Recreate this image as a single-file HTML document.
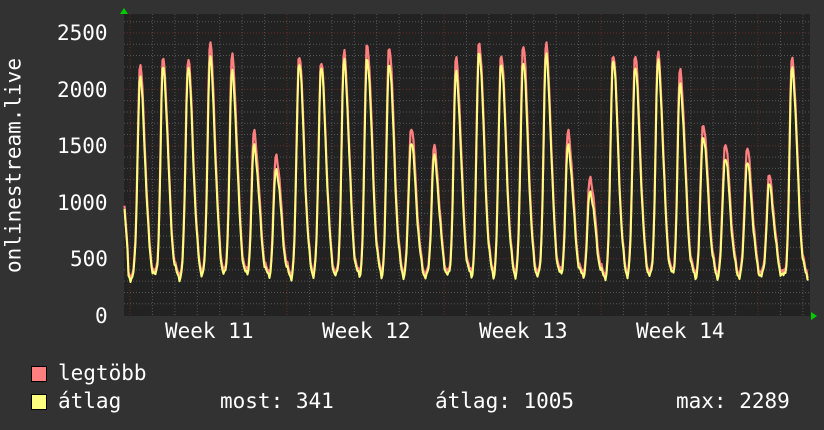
<!DOCTYPE html>
<html><head><meta charset="utf-8"><style>
html,body{margin:0;padding:0;background:#323232;}
body{width:824px;height:430px;overflow:hidden;position:relative;font-family:"DejaVu Sans Mono","Liberation Mono",monospace;color:#fff;}
.t{position:absolute;font-size:21px;white-space:pre;line-height:1;}
.sw{position:absolute;width:14px;height:14px;border:1px solid #000;}
</style></head><body>
<svg id="g" width="824" height="430" style="position:absolute;left:0;top:0">
<rect x="124" y="14" width="686" height="302" fill="#222"/>
<g id="grid"></g>
<g id="data"></g>
<polygon points="120,14 128,14 124,8" fill="#0c0"/>
<polygon points="811,312 811,320 817,316" fill="#0c0"/>
</svg>
<div class="t" style="left:57px;top:23px">2500</div>
<div class="t" style="left:57px;top:80px">2000</div>
<div class="t" style="left:57px;top:136px">1500</div>
<div class="t" style="left:57px;top:193px">1000</div>
<div class="t" style="left:70px;top:249px">500</div>
<div class="t" style="left:95px;top:306px">0</div>
<div class="t" style="left:-96px;top:155px;transform:rotate(-90deg);width:220px;text-align:center">onlinestream.live</div>
<div class="t" style="left:165px;top:321px">Week 11</div>
<div class="t" style="left:322px;top:321px">Week 12</div>
<div class="t" style="left:479px;top:321px">Week 13</div>
<div class="t" style="left:636px;top:321px">Week 14</div>
<div class="sw" style="left:31px;top:366px;background:#ff7f7f"></div>
<div class="sw" style="left:31px;top:394px;background:#ffff7f"></div>
<div class="t" style="left:58px;top:363px">legtöbb</div>
<div class="t" style="left:58px;top:391px">átlag</div>
<div class="t" style="left:220px;top:391px">most: 341</div>
<div class="t" style="left:435px;top:391px">átlag: 1005</div>
<div class="t" style="left:676px;top:391px">max: 2289</div>
<script>
var NS="http://www.w3.org/2000/svg";
function el(p,t,a){var e=document.createElementNS(NS,t);for(var k in a)e.setAttribute(k,a[k]);p.appendChild(e);return e;}
var grid=document.getElementById('grid'),data=document.getElementById('data');
function Y(v){return 315-v*0.1128;}
for(var v=100;v<=2600;v+=100){var y=Y(v);if(y<14)break;var maj=v%500==0;
el(grid,'line',{x1:124,x2:810,y1:y,y2:y,stroke:maj?'#6a2a2a':'#555','stroke-dasharray':'1,2','stroke-width':1});}
for(var x=130-22.43;x<810;x+=22.43){if(x<124)continue;var d=Math.round((x-130)/22.43);var maj=d%7==0;
el(grid,'line',{x1:x,x2:x,y1:14,y2:316,stroke:maj?'#6a2a2a':'#555','stroke-dasharray':'1,2','stroke-width':1});}
var P=[[140,2180,2100],[163,2250,2200],[188,2250,2200],[210,2380,2280],[232,2270,2150],[254,1600,1500],[276,1400,1300],[299,2290,2250],[321,2220,2200],[344,2300,2250],[367,2390,2290],[389,2370,2250],[411,1640,1540],[434,1460,1400],[456,2250,2150],[479,2410,2350],[501,2300,2250],[523,2370,2250],[546,2370,2300],[568,1600,1500],[590,1200,1100],[613,2300,2280],[635,2280,2200],[658,2290,2250],[680,2150,2050],[703,1680,1600],[725,1500,1400],[747,1450,1350],[769,1200,1150],[792,2260,2200]];
function val(x,idx){
 var s=0;
 for(var i=0;i<P.length;i++){var dx=x-P[i][0];var pk=P[i][idx]-330;var f;
  if(dx<0)f=Math.exp(-Math.pow(dx/3.4,2));else f=Math.exp(-Math.pow(dx/7,2));
  s=Math.max(s,pk*f);}
 var base=330+25*Math.sin(x*0.9)+15*Math.sin(x*2.3);
 if(x<128)return 1000-(x-124)*120;
 return base+s;}
function path(idx,col,w){var d='';for(var x=124.5;x<=809;x+=1){var v=val(x,idx);if(idx==1)v+=20+10*Math.abs(Math.sin(x*1.7));d+=(d?'L':'M')+x.toFixed(1)+','+Y(v).toFixed(1);}
 el(data,'path',{d:d,fill:'none',stroke:col,'stroke-width':w,'stroke-linejoin':'round'});}
path(1,'#ff7f7f',2.2);
path(2,'#ffff7f',2);
</script>
</body></html>
